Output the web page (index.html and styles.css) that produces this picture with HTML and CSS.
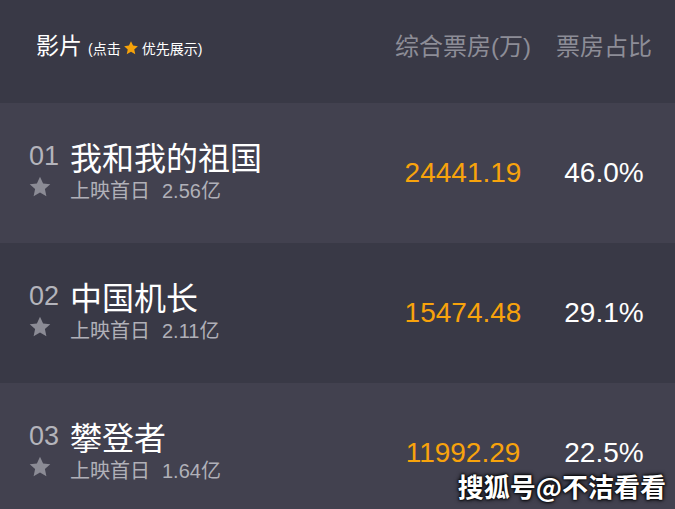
FILE: index.html
```html
<!DOCTYPE html>
<html lang="zh-CN">
<head>
<meta charset="utf-8">
<title>票房</title>
<link rel="stylesheet" href="styles.css">
</head>
<body>
<div class="board">
  <div class="head">
    <div class="head-film">
      <span class="head-title">影片</span>
      <span class="head-hint">(点击 <svg class="hint-star" viewBox="0 0 24 24"><path d="M12 1.8l3.1 6.6 7.2.8-5.4 4.9 1.5 7.1L12 17.6l-6.4 3.6 1.5-7.1-5.4-4.9 7.2-.8z"/></svg> 优先展示)</span>
    </div>
    <div class="head-col">综合票房(万)</div>
    <div class="head-col">票房占比</div>
  </div>

  <div class="row odd">
    <div class="film">
      <div class="side">
        <span class="rank">01</span>
        <svg class="star" viewBox="0 0 24 24"><path d="M12 1.8l3.1 6.6 7.2.8-5.4 4.9 1.5 7.1L12 17.6l-6.4 3.6 1.5-7.1-5.4-4.9 7.2-.8z"/></svg>
      </div>
      <div class="info">
        <div class="name">我和我的祖国</div>
        <div class="sub">上映首日<span class="sub-val">2.56亿</span></div>
      </div>
    </div>
    <div class="box">24441.19</div>
    <div class="pct">46.0%</div>
  </div>

  <div class="row even">
    <div class="film">
      <div class="side">
        <span class="rank">02</span>
        <svg class="star" viewBox="0 0 24 24"><path d="M12 1.8l3.1 6.6 7.2.8-5.4 4.9 1.5 7.1L12 17.6l-6.4 3.6 1.5-7.1-5.4-4.9 7.2-.8z"/></svg>
      </div>
      <div class="info">
        <div class="name">中国机长</div>
        <div class="sub">上映首日<span class="sub-val">2.11亿</span></div>
      </div>
    </div>
    <div class="box">15474.48</div>
    <div class="pct">29.1%</div>
  </div>

  <div class="row odd">
    <div class="film">
      <div class="side">
        <span class="rank">03</span>
        <svg class="star" viewBox="0 0 24 24"><path d="M12 1.8l3.1 6.6 7.2.8-5.4 4.9 1.5 7.1L12 17.6l-6.4 3.6 1.5-7.1-5.4-4.9 7.2-.8z"/></svg>
      </div>
      <div class="info">
        <div class="name">攀登者</div>
        <div class="sub">上映首日<span class="sub-val">1.64亿</span></div>
      </div>
    </div>
    <div class="box">11992.29</div>
    <div class="pct">22.5%</div>
  </div>
</div>
<div class="watermark">搜狐号@不洁看看</div>
</body>
</html>
```

FILE: styles.css
```css
html, body {
  margin: 0;
  padding: 0;
  background: #393946;
}
body {
  font-family: "Liberation Sans", "Noto Sans CJK SC", sans-serif;
  width: 675px;
  height: 509px;
  overflow: hidden;
  position: relative;
}
.board {
  display: flex;
  flex-direction: column;
}
.head, .row {
  display: grid;
  grid-template-columns: 1fr 140px 142px;
  align-items: center;
}
.head {
  height: 103px;
  box-sizing: border-box;
  padding-bottom: 15px;
  background: #393946;
}
.head-film {
  padding-left: 36px;
  display: flex;
  align-items: baseline;
}
.head-title {
  color: #ffffff;
  font-size: 23px;
}
.head-hint {
  color: #ffffff;
  font-size: 14px;
  margin-left: 6px;
  display: inline-flex;
  align-items: center;
}
.hint-star {
  width: 16px;
  height: 16px;
  fill: #f5a20a;
  margin: 0 3px 0 2px;
}
.head-col {
  color: #8d8d97;
  font-size: 24px;
  text-align: center;
}
.row {
  height: 140px;
}
.odd { background: #42414f; }
.even { background: #393946; }
.film {
  display: flex;
  align-items: center;
  padding-left: 29px;
}
.side {
  width: 41px;
  box-sizing: border-box;
  padding-bottom: 6px;
  display: flex;
  flex-direction: column;
  align-items: flex-start;
}
.rank {
  color: #b4b4bb;
  font-size: 27px;
  line-height: 30px;
}
.star {
  width: 24px;
  height: 24px;
  fill: #8b8b95;
  margin-top: 4px;
  margin-left: -1px;
}
.info {
  display: flex;
  flex-direction: column;
}
.name {
  color: #ffffff;
  font-size: 32px;
  line-height: 36px;
}
.sub {
  color: #b0b0b8;
  font-size: 20px;
  line-height: 28px;
}
.sub-val {
  margin-left: 12px;
}
.box {
  color: #f8a30c;
  font-size: 28px;
  text-align: center;
}
.pct {
  color: #ffffff;
  font-size: 28px;
  text-align: center;
}
.watermark {
  position: absolute;
  right: 9px;
  bottom: 5px;
  color: #ffffff;
  font-size: 26px;
  font-weight: bold;
  font-family: "Noto Sans CJK SC", sans-serif;
  text-shadow: 0 0 3px #000, 0 0 5px #000, 0 0 2px #000;
}
```
